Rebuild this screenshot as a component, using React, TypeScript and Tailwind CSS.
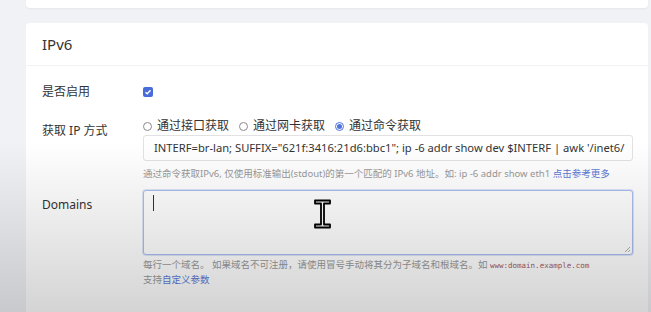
import React from "react";

const font = { fontFamily: '"Noto Sans", "Noto Sans CJK SC", sans-serif' };

const Radio = ({ checked, label }: { checked?: boolean; label: string }) => (
  <label className="flex items-center gap-[5px] mr-[10px]">
    <span
      className={`w-[9px] h-[9px] rounded-full border flex items-center justify-center ${
        checked ? "border-[#4f73dc]" : "border-[#8a8a8a]"
      }`}
    >
      {checked && <span className="w-[5px] h-[5px] rounded-full bg-[#4f73dc]" />}
    </span>
    <span className="text-[12px] text-[#333]">{label}</span>
  </label>
);

export default function App() {
  return (
    <div className="relative w-[651px] h-[312px] overflow-hidden bg-[#f1f2f6]" style={font}>
      <div className="ml-[26px] mr-[3px] h-[8px] bg-white rounded-b shadow-[0_1px_2px_rgba(0,0,0,0.05)]" />

      <div className="ml-[26px] mr-[3px] mt-[15px] bg-white rounded h-[320px]">
        <div className="h-[43px] px-4 flex items-center border-b border-[#f2f2f2]">
          <span className="text-[15px] text-[#333]">IPv6</span>
        </div>

        <div className="pl-4 pr-[15px] pt-4">
          <div className="flex items-center h-5">
            <div className="w-[101px] shrink-0 text-[12px] text-[#333]">是否启用</div>
            <span className="w-[10px] h-[10px] rounded-[2px] bg-[#4a6cd9] flex items-center justify-center">
              <svg width="8" height="8" viewBox="0 0 8 8">
                <path d="M1.5 4.2 L3.2 5.8 L6.5 2.2" stroke="white" strokeWidth="1.4" fill="none" />
              </svg>
            </span>
          </div>

          <div className="flex mt-[15px]">
            <div className="w-[101px] shrink-0 pt-[5px] text-[12px] text-[#333] leading-[18px]">获取 IP 方式</div>
            <div className="flex-1 min-w-0">
              <div className="flex items-center h-[18px]">
                <Radio label="通过接口获取" />
                <Radio label="通过网卡获取" />
                <Radio checked label="通过命令获取" />
              </div>
              <div className="h-[26px] border border-[#e2e2e2] rounded-[3px] flex items-center pl-[10px] pr-[8px] whitespace-nowrap text-[11.2px] text-[#333]">
                INTERF=br-lan; SUFFIX="621f:3416:21d6:bbc1"; ip -6 addr show dev $INTERF | awk '/inet6/
              </div>
              <div className="mt-[6px] text-[9.5px] leading-[14px] text-[#999] whitespace-nowrap">
                通过命令获取IPv6, 仅使用标准输出(stdout)的第一个匹配的 IPv6 地址。如: ip -6 addr show eth1{" "}
                <span className="text-[#5b78d6]">点击参考更多</span>
              </div>
            </div>
          </div>

          <div className="flex mt-[9px]">
            <div className="w-[101px] shrink-0 pt-[8px] text-[12px] text-[#333] leading-[14px]">Domains</div>
            <div className="flex-1 min-w-0">
              <div className="relative h-[65px] border border-[#a9bdf0] rounded-[3px] shadow-[0_0_0_1px_rgba(120,150,230,0.25)] bg-white">
                <span className="absolute left-[9px] top-[4px] w-px h-[16px] bg-[#333]" />
                <svg className="absolute right-[1px] bottom-[1px]" width="7" height="7" viewBox="0 0 7 7">
                  <path d="M6 1 L1 6 M6 4 L4 6" stroke="#999" strokeWidth="0.8" />
                </svg>
              </div>
              <div className="mt-[3px] text-[9.5px] leading-[14px] text-[#999] whitespace-nowrap">
                每行一个域名。 如果域名不可注册，请使用冒号手动将其分为子域名和根域名。如{" "}
                <code className="text-[7.5px] text-[#a25a6b]" style={{ fontFamily: '"DejaVu Sans Mono", monospace' }}>
                  www:domain.example.com
                </code>
              </div>
              <div className="text-[9.5px] leading-[14px] text-[#999]">
                支持<span className="text-[#5b78d6]">自定义参数</span>
              </div>
            </div>
          </div>
        </div>
      </div>

      <svg className="absolute left-[313px] top-[199px]" width="19" height="30" viewBox="0 0 19 30">
        <path
          d="M2 1.5 H17 V4.5 H11 V25.5 H17 V28.5 H2 V25.5 H8 V4.5 H2 Z"
          fill="white"
          stroke="black"
          strokeWidth="1.8"
          strokeLinejoin="round"
        />
      </svg>

      <div className="pointer-events-none absolute inset-x-0 bottom-0 h-[170px] bg-gradient-to-b from-transparent to-[rgba(0,0,0,0.17)]" />
    </div>
  );
}
